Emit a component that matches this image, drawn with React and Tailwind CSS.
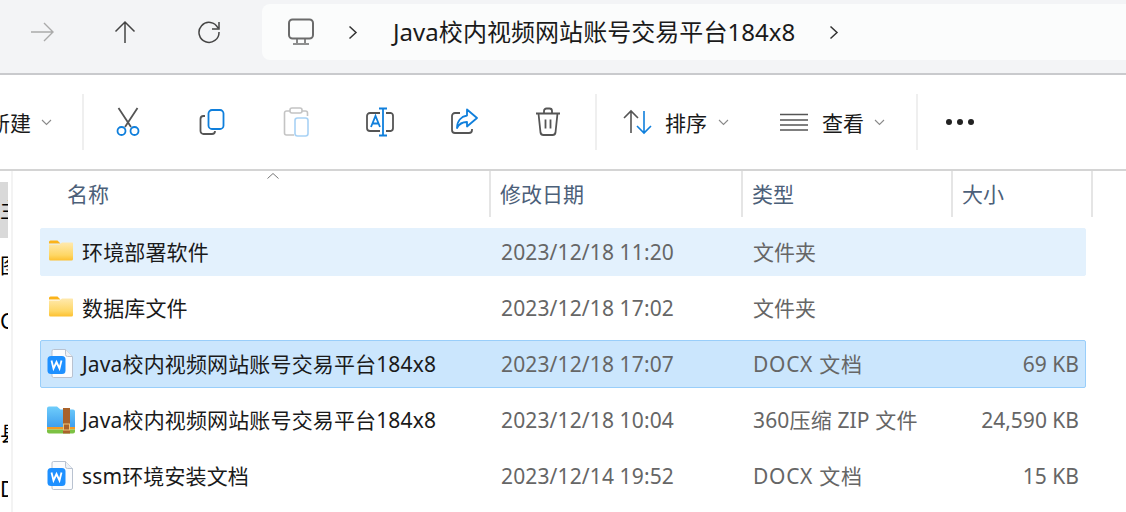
const font = { fontFamily: '"Noto Sans", "Noto Sans CJK SC", sans-serif' };

const Chevron = ({ className = '' }) => (
  <svg width="11" height="7" viewBox="0 0 11 7" fill="none" stroke="#8a8a8a" strokeWidth="1.1" className={`shrink-0 ${className}`}>
    <path d="M1 1l4.500 4.500L10 1" />
  </svg>
);

const Crumb = () => (
  <svg width="10" height="15" viewBox="0 0 10 15" fill="none" stroke="#333" strokeWidth="1.5">
    <path d="M1.500 1.500l6.500 6-6.500 6" />
  </svg>
);

const Folder = ({ id }) => (
  <svg width="26" height="21" viewBox="0 0 26 21" className="shrink-0 -mt-[5px] -ml-[2px]">
    <defs>
      <linearGradient id={id} x1="0" y1="0" x2="0" y2="1">
        <stop offset="0" stopColor="#ffe9ae" />
        <stop offset="0.7" stopColor="#fed765" />
        <stop offset="1" stopColor="#fdc02f" />
      </linearGradient>
    </defs>
    <path d="M1 2A1.500 1.500 0 0 1 2.500 0.500h7l3 3H1z" fill="#fbb31a" />
    <path d="M1 4.500h10.500L14 2.500h10.500A1 1 0 0 1 25 3.500V19a1.500 1.500 0 0 1-1.500 1.500h-21A1.500 1.500 0 0 1 1 19z" fill={`url(#${id})`} />
  </svg>
);

const WordDoc = () => (
  <svg width="26" height="29" viewBox="0 0 26 29" className="shrink-0 -ml-[3px] -mt-[3px]">
    <path d="M6.500 0.500h12L25.500 7.500V27a1.500 1.500 0 0 1-1.500 1.500H6.500A1.500 1.500 0 0 1 5 27V2A1.500 1.500 0 0 1 6.500 0.500z" fill="#fbfcfe" stroke="#b9c2d0" />
    <path d="M18.500 0.500v5a2 2 0 0 0 2 2h5" fill="#eef1f6" stroke="#b9c2d0" />
    <rect x="0.500" y="7" width="18" height="18" rx="3.500" fill="#1e90ff" />
    <path d="M4.500 11.500l2 8 3-6.500 3 6.500 2-8" fill="none" stroke="#fff" strokeWidth="1.800" />
  </svg>
);

const ZipIcon = () => (
  <svg width="28" height="28" viewBox="0 0 28 28" className="shrink-0 -ml-[1px] -mt-[3px]">
    <defs>
      <linearGradient id="zipBlue" x1="0" y1="0" x2="0" y2="1">
        <stop offset="0" stopColor="#6fcdfb" />
        <stop offset="1" stopColor="#3f9fee" />
      </linearGradient>
    </defs>
    <path d="M0 2.500A2 2 0 0 1 2 0.500h8l3.500 3H26a2 2 0 0 1 2 2V21H0z" fill="url(#zipBlue)" />
    <path d="M0 21h28v2.500H0z" fill="#f59a23" />
    <path d="M0 23.500h28V25.500a2 2 0 0 1-2 2H2a2 2 0 0 1-2-2z" fill="#7cc143" />
    <rect x="16" y="2" width="7" height="25.500" fill="#a9622a" />
    <rect x="16.500" y="18" width="6" height="6" fill="none" stroke="#e9c27a" strokeWidth="1" />
  </svg>
);

const icons = [
  <svg key="cut" width="28" height="30" viewBox="0 0 28 30" fill="none" strokeWidth="1.800">
    <path d="M4.500 1l12.500 19M23.500 1L11 20" stroke="#555" />
    <circle cx="7.500" cy="24" r="4" stroke="#0f7fdc" />
    <circle cx="20.500" cy="24" r="4" stroke="#0f7fdc" />
  </svg>,
  <svg key="copy" width="26" height="26" viewBox="0 0 26 26" fill="none" strokeWidth="1.800">
    <path d="M6 7H4.500A3 3 0 0 0 1.500 10v12a3 3 0 0 0 3 3H13a3 3 0 0 0 3-3" stroke="#555" />
    <rect x="9.500" y="1" width="15" height="19" rx="3.500" stroke="#0f7fdc" />
  </svg>,
  <svg key="paste" width="26" height="30" viewBox="0 0 26 30" fill="none" strokeWidth="1.600">
    <path d="M7 4H3.500a2 2 0 0 0-2 2v20a2 2 0 0 0 2 2H11M19 4h3.500a2 2 0 0 1 2 2v3" stroke="#c4c4c4" />
    <rect x="7" y="1" width="12" height="5" rx="2" stroke="#c4c4c4" />
    <rect x="12" y="11" width="13" height="18" rx="2.500" stroke="#a8d2f5" />
  </svg>,
  <svg key="rename" width="30" height="30" viewBox="0 0 30 30" fill="none" strokeWidth="1.800">
    <path d="M15 6H5a3 3 0 0 0-3 3v12a3 3 0 0 0 3 3h10M21 6h5a3 3 0 0 1 2 3v12a3 3 0 0 1-2 3h-5" stroke="#555" />
    <path d="M14 1.500h8M18 1.500v27M14 28.500h8" stroke="#0f7fdc" />
    <path d="M6 20l4.500-11L15 20M7.500 16.500h6" stroke="#0f7fdc" />
  </svg>,
  <svg key="share" width="28" height="28" viewBox="0 0 28 28" fill="none" strokeWidth="1.800">
    <path d="M10 5H5a3 3 0 0 0-3 3v14a3 3 0 0 0 3 3h14a3 3 0 0 0 3-3v-1" stroke="#555" />
    <path d="M17 1.500L27 10l-10 8.500V14c-5 0-8 2-10 6 0-7 4-11.500 10-12.500z" stroke="#0f7fdc" strokeLinejoin="round" />
  </svg>,
  <svg key="trash" width="26" height="30" viewBox="0 0 26 30" fill="none" stroke="#555" strokeWidth="1.800">
    <path d="M1 6.500h24M9 6.500V4a2.500 2.500 0 0 1 2.500-2.500h3A2.500 2.500 0 0 1 17 4v2.500M3.500 6.500l2 19a3 3 0 0 0 3 2.500h9a3 3 0 0 0 3-2.500l2-19M10.500 12.500v9M15.500 12.500v9" />
  </svg>,
];

const rows = [
  { name: '环境部署软件', date: '2023/12/18 11:20', type: '文件夹', size: '', icon: <Folder id="folderA" />, bg: 'bg-[#e3f1fd] border-[#e3f1fd]' },
  { name: '数据库文件', date: '2023/12/18 17:02', type: '文件夹', size: '', icon: <Folder id="folderB" />, bg: 'border-transparent' },
  { name: 'Java校内视频网站账号交易平台184x8', date: '2023/12/18 17:07', type: 'DOCX 文档', typeClass: 'tracking-[0.7px]', size: '69 KB', icon: <WordDoc />, bg: 'bg-[#cbe6fd] border-[#99cefa]' },
  { name: 'Java校内视频网站账号交易平台184x8', date: '2023/12/18 10:04', type: '360压缩 ZIP 文件', typeClass: 'tracking-[0.15px]', size: '24,590 KB', icon: <ZipIcon />, bg: 'border-transparent' },
  { name: 'ssm环境安装文档', date: '2023/12/14 19:52', type: 'DOCX 文档', typeClass: 'tracking-[0.7px]', size: '15 KB', icon: <WordDoc />, bg: 'border-transparent' },
];

const sideItems = ['主', '图', 'C', '', '县', 'D'];

const Row = ({ name, date, type, typeClass = '', size, icon, bg }) => (
  <div className={`flex items-center h-12 w-[1046px] rounded-[2px] border pt-[2px] ${bg}`}>
    <div className="w-[41px] flex justify-center shrink-0">{icon}</div>
    <div className="w-[419px] text-[21px] tracking-[0.14px] text-[#1a1a1a] whitespace-nowrap shrink-0">{name}</div>
    <div className="w-[252px] text-[21px] tracking-[0.13px] text-[#666] shrink-0">{date}</div>
    <div className={`w-[210px] text-[21px] text-[#666] shrink-0 whitespace-nowrap ${typeClass}`}>{type}</div>
    <div className="w-[116px] text-[21px] text-[#666] shrink-0 text-right whitespace-nowrap">{size}</div>
  </div>
);

export default function App() {
  return (
    <div style={font} className="w-[1126px] h-[512px] bg-white overflow-hidden flex flex-col">
      {/* address bar */}
      <div className="h-[75px] shrink-0 bg-[#f3f4f6] border-b-2 border-[#c9cacd] pt-1 pl-[30px] flex">
        <div className="flex items-center h-14 gap-[62px] w-[232px] shrink-0">
          <svg width="24" height="22" viewBox="0 0 24 22" fill="none" stroke="#aaa" strokeWidth="1.400"><path d="M1 11h21M14 2l9 9-9 9" /></svg>
          <svg width="22" height="24" viewBox="0 0 22 24" fill="none" stroke="#444" strokeWidth="1.500" className="-ml-[2px]"><path d="M11 23V2M1.500 11.500L11 2l9.500 9.500" /></svg>
          <svg width="24" height="24" viewBox="0 0 24 24" fill="none" stroke="#444" strokeWidth="1.500" className="-ml-[1px]"><path d="M21 8a10 10 0 1 0 1 4M22 2v7h-7" /></svg>
        </div>
        <div className="flex-1 h-14 bg-[#fbfcfc] rounded-l-lg flex items-center pl-[25px]">
          <svg width="28" height="28" viewBox="0 0 28 28" fill="none" stroke="#6b6b6b" strokeWidth="2"><rect x="2" y="1.500" width="24" height="19" rx="3.500" /><path d="M10 21v4M18 21v4M6 26h16" strokeWidth="1.600" /></svg>
          <div className="ml-[33px]"><Crumb /></div>
          <span className="ml-[35px] text-2xl tracking-[0.05px] text-[#1a1a1a] whitespace-nowrap">Java校内视频网站账号交易平台184x8</span>
          <div className="ml-[34px]"><Crumb /></div>
        </div>
      </div>

      {/* command bar */}
      <div className="h-[96px] shrink-0 border-b-2 border-[#d4d4d4] flex items-center">
        <div className="w-[84px] h-[56px] shrink-0 border-r-2 border-[#efefef] flex items-center justify-end pr-[30px] gap-[10px] overflow-hidden">
          <span className="text-[21px] text-[#1a1a1a] whitespace-nowrap pt-[3px]">新建</span>
          <Chevron />
        </div>
        <div className="w-[513px] h-[56px] shrink-0 border-r-2 border-[#efefef] flex items-center pl-[2px]">
          {icons.map((icon) => (
            <div key={icon.key} className="w-[84px] flex justify-center shrink-0">{icon}</div>
          ))}
        </div>
        <div className="w-[321px] h-[56px] shrink-0 border-r-2 border-[#efefef] flex items-center pl-[26px] text-[21px] text-[#1a1a1a]">
          <svg width="30" height="26" viewBox="0 0 30 26" fill="none" strokeWidth="1.600">
            <path d="M8 24V2M1 9l7-7 7 7" stroke="#555" />
            <path d="M21 2v22M14 17l7 7 7-7" stroke="#0f7fdc" />
          </svg>
          <span className="ml-[12px] pt-[3px]">排序</span>
          <Chevron className="ml-[11px]" />
          <svg width="28" height="20" viewBox="0 0 28 20" fill="none" stroke="#555" strokeWidth="1.600" className="ml-[51px]"><path d="M0 2.500h28M0 8h28M0 13h28M0 18h28" /></svg>
          <span className="ml-[14px] pt-[3px]">查看</span>
          <Chevron className="ml-[10px]" />
        </div>
        <div className="flex gap-[5px] pl-[28px]">
          <span className="w-[6px] h-[6px] rounded-full bg-[#222]" />
          <span className="w-[6px] h-[6px] rounded-full bg-[#222]" />
          <span className="w-[6px] h-[6px] rounded-full bg-[#222]" />
        </div>
      </div>

      <div className="flex flex-1 min-h-0">
        {/* sidebar sliver */}
        <div className="w-[13px] shrink-0 border-r-2 border-[#f3f3f3] pr-[3px] pt-[11px]">
          <div className="w-2 overflow-hidden">
            {sideItems.map((t, i) => (
              <div key={i} className={`h-14 flex items-center text-[21px] text-black ${i === 0 ? 'bg-[#d9d9d9]' : ''}`}>{t}</div>
            ))}
          </div>
        </div>

        <div className="flex-1 min-w-0 relative">
          {/* sort caret */}
          <svg width="12" height="6" viewBox="0 0 12 6" fill="none" stroke="#777" strokeWidth="1" className="absolute left-[254px] top-[2px]"><path d="M0.500 5.500L6 0.500l5.500 5" /></svg>
          {/* column headers */}
          <div className="flex h-[46px] text-[21px] text-[#4c6079] items-center">
            <div className="w-[478px] h-full pl-[54px] pt-[2px] flex items-center border-r-2 border-[#e5e5e5] shrink-0">名称</div>
            <div className="w-[252px] h-full pl-[9px] pt-[2px] flex items-center border-r-2 border-[#e5e5e5] shrink-0">修改日期</div>
            <div className="w-[210px] h-full pl-[9px] pt-[2px] flex items-center border-r-2 border-[#e5e5e5] shrink-0">类型</div>
            <div className="w-[140px] h-full pl-[9px] pt-[2px] flex items-center border-r-2 border-[#e5e5e5] shrink-0">大小</div>
          </div>
          <div className="flex flex-col gap-2 pl-[27px] pt-[11px]">
            {rows.map((r, i) => <Row key={i} {...r} />)}
          </div>
        </div>
      </div>
    </div>
  );
}
